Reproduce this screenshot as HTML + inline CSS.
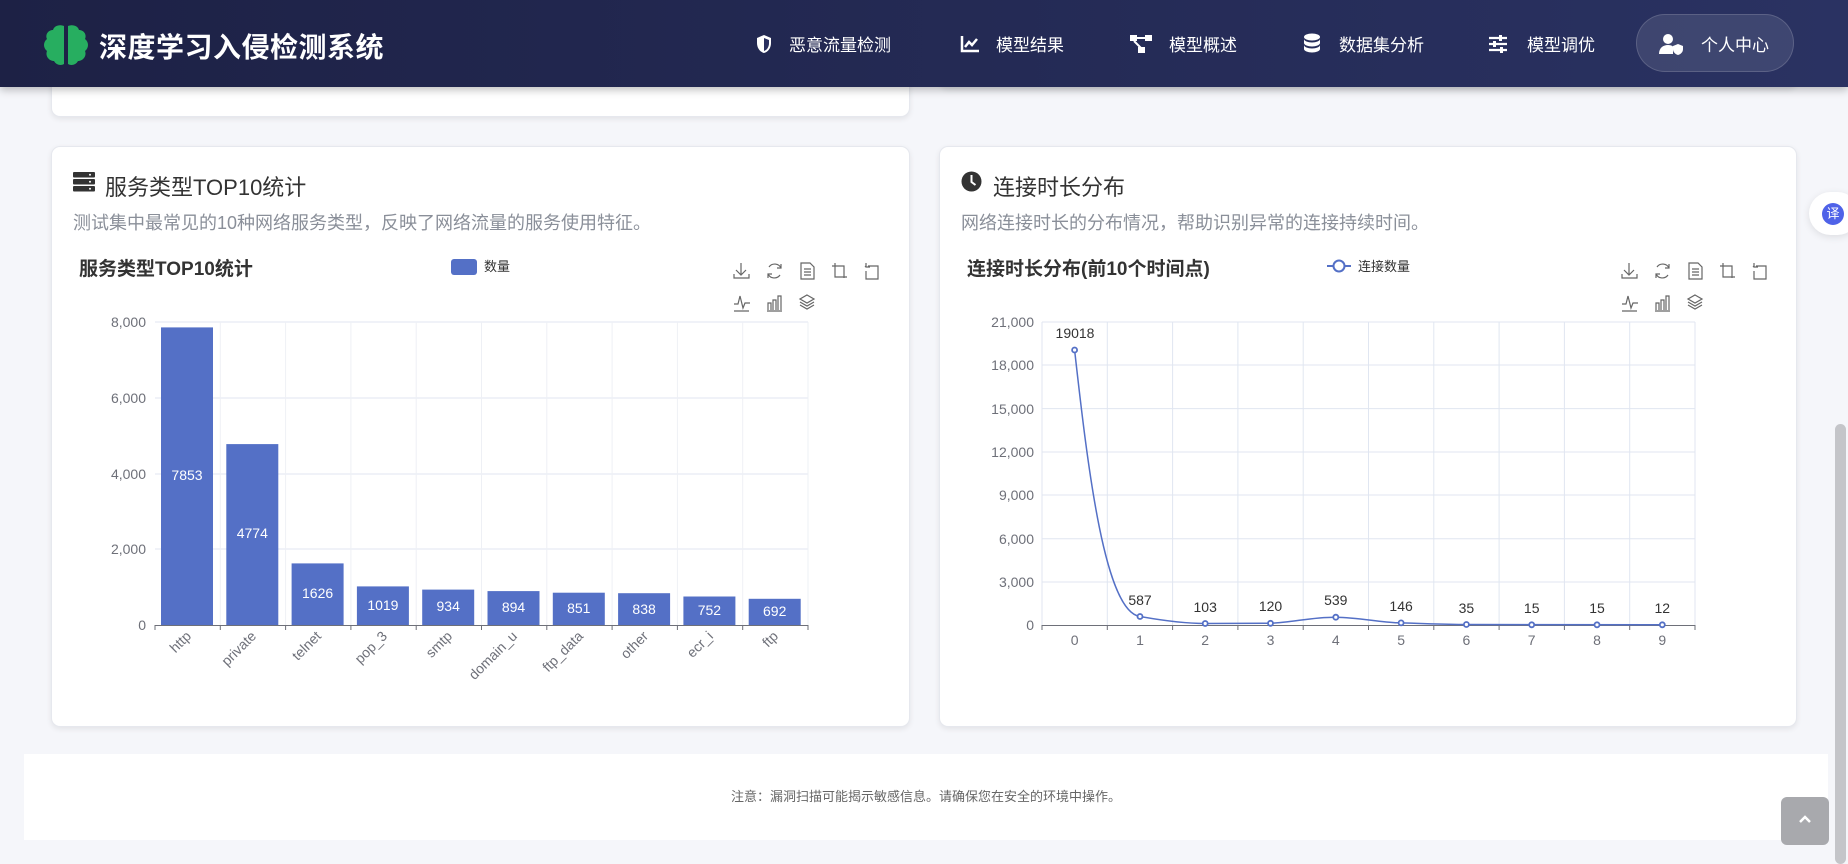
<!DOCTYPE html>
<html><head><meta charset="utf-8">
<style>
*{margin:0;padding:0;box-sizing:border-box}
body{width:1848px;height:864px;overflow:hidden;background:#f5f6fa;font-family:"Liberation Sans","Noto Sans CJK SC",sans-serif;position:relative}
.hdr{position:absolute;left:0;top:0;width:1848px;height:87px;background:linear-gradient(90deg,#1d2145,#2a3262);box-shadow:0 3px 8px rgba(0,0,0,.25);z-index:5}
.logo{position:absolute;left:99px;top:26px;color:#fff;font-size:28px;font-weight:bold;letter-spacing:0.5px}
.nav{position:absolute;top:31px;color:#fff;font-size:17px;display:flex;align-items:center;gap:10px}
.nav svg{display:block}
.pill{position:absolute;left:1636px;top:14px;width:158px;height:58px;border-radius:29px;background:rgba(255,255,255,.1);border:1px solid rgba(255,255,255,.15)}
.card{position:absolute;background:#fff;border:1px solid #e6e8ee;border-radius:9px;box-shadow:0 2px 6px rgba(0,0,0,.08)}
.ct{position:absolute;left:105px;top:170px;font-size:22px;color:#333}
.cd{position:absolute;top:209px;font-size:18px;color:#8a8f99}
.footer{position:absolute;left:24px;top:754px;width:1804px;height:86px;background:#fff;text-align:center;font-size:13px;color:#666;line-height:86px}
</style></head><body>
<div class="hdr">
  <svg style="position:absolute;left:42px;top:24px" width="48" height="42" viewBox="0 0 48 42">
    <path d="M22 2c-5-2-10 0-11 4-5 0-8 5-6 9-4 3-4 9 0 12-2 5 2 10 7 10 2 4 7 5 10 3z" fill="#27ae60"/>
    <path d="M26 2c5-2 10 0 11 4 5 0 8 5 6 9 4 3 4 9 0 12 2 5-2 10-7 10-2 4-7 5-10 3z" fill="#27ae60"/>
  </svg>
  <div class="logo">深度学习入侵检测系统</div>
  <div class="nav" style="left:755px"><svg width="18" height="20" viewBox="0 0 18 20"><path d="M9 1L2 4v5c0 5 3 9 7 10 4-1 7-5 7-10V4z" fill="#fff"/><path d="M9 4v13c3-1 5-4 5-8V6z" fill="#2a3060"/></svg><span style="margin-left:6px">恶意流量检测</span></div>
  <div class="nav" style="left:960px"><svg width="20" height="18" viewBox="0 0 20 18"><path d="M2 1v15h17" stroke="#fff" stroke-width="2.5" fill="none"/><path d="M5 12l4-5 3 3 5-6" stroke="#fff" stroke-width="2.5" fill="none"/></svg><span style="margin-left:6px">模型结果</span></div>
  <div class="nav" style="left:1129px"><svg width="24" height="20" viewBox="0 0 24 20"><rect x="1" y="1" width="7" height="6" fill="#fff"/><rect x="16" y="1" width="7" height="6" fill="#fff"/><rect x="9" y="13" width="7" height="6" fill="#fff"/><path d="M8 4h8M5 7l7 7" stroke="#fff" stroke-width="2"/></svg><span style="margin-left:6px">模型概述</span></div>
  <div class="nav" style="left:1303px"><svg width="18" height="22" viewBox="0 0 18 22"><ellipse cx="9" cy="4" rx="8" ry="3.5" fill="#fff"/><path d="M1 6v4c0 2 4 3.5 8 3.5s8-1.5 8-3.5V6c0 2-4 3.5-8 3.5S1 8 1 6zM1 12v4c0 2 4 3.5 8 3.5s8-1.5 8-3.5v-4c0 2-4 3.5-8 3.5S1 14 1 12z" fill="#fff"/></svg><span style="margin-left:8px">数据集分析</span></div>
  <div class="nav" style="left:1488px"><svg width="20" height="18" viewBox="0 0 20 18"><path d="M1 3h18M1 9h18M1 15h18" stroke="#fff" stroke-width="2.2"/><rect x="11" y="0" width="3" height="6" fill="#fff"/><rect x="5" y="6" width="3" height="6" fill="#fff"/><rect x="12" y="12" width="3" height="6" fill="#fff"/></svg><span style="margin-left:9px">模型调优</span></div>
  <div class="pill"></div>
  <div class="nav" style="left:1659px;top:31px"><svg width="26" height="22" viewBox="0 0 26 22"><circle cx="9" cy="6" r="5" fill="#fff"/><path d="M0 21c0-6 4-9 9-9 2 0 4 .5 5 1.5V21z" fill="#fff"/><path d="M19 11l-5 2v3c0 3 2 5 5 6 3-1 5-3 5-6v-3z" fill="#fff"/></svg><span style="margin-left:6px">个人中心</span></div>
</div>

<div class="card" style="left:51px;top:40px;width:859px;height:77px"></div>
<div class="card" style="left:939px;top:40px;width:858px;height:48px"></div>

<div class="card" style="left:51px;top:146px;width:859px;height:581px"></div>
<div class="card" style="left:939px;top:146px;width:858px;height:581px"></div>

<svg style="position:absolute;left:73px;top:172px" width="22" height="20" viewBox="0 0 22 20"><rect x="0" y="0" width="22" height="5.5" rx="1" fill="#333"/><rect x="0" y="7" width="22" height="5.5" rx="1" fill="#333"/><rect x="0" y="14" width="22" height="5.5" rx="1" fill="#333"/><circle cx="17" cy="2.7" r="1" fill="#fff"/><circle cx="17" cy="9.7" r="1" fill="#fff"/><circle cx="17" cy="16.7" r="1" fill="#fff"/></svg>
<div class="ct">服务类型TOP10统计</div>
<div class="cd" style="left:73px">测试集中最常见的10种网络服务类型，反映了网络流量的服务使用特征。</div>

<svg style="position:absolute;left:961px;top:171px" width="21" height="21" viewBox="0 0 21 21"><circle cx="10.5" cy="10.5" r="10" fill="#333"/><path d="M10.5 4v7l4 3" stroke="#fff" stroke-width="2" fill="none"/></svg>
<div class="ct" style="left:993px">连接时长分布</div>
<div class="cd" style="left:961px">网络连接时长的分布情况，帮助识别异常的连接持续时间。</div>

<svg style="position:absolute;left:0;top:0" width="1848" height="864" viewBox="0 0 1848 864" font-family="Liberation Sans, Noto Sans CJK SC, sans-serif">
<g id="L">
 <text x="79" y="275" font-size="19" font-weight="bold" fill="#333">服务类型TOP10统计</text>
 <rect x="451" y="259" width="26" height="16" rx="3" fill="#5470c6"/>
 <text x="484" y="271" font-size="13" fill="#333">数量</text>
 <g stroke="#e0e6f1" stroke-width="1">
  <line x1="155" y1="322" x2="808" y2="322"/><line x1="155" y1="398" x2="808" y2="398"/><line x1="155" y1="474" x2="808" y2="474"/><line x1="155" y1="549" x2="808" y2="549"/>
 </g>
 <g stroke="#eef0f5">
  <line x1="220.3" y1="322" x2="220.3" y2="625"/><line x1="285.6" y1="322" x2="285.6" y2="625"/><line x1="350.9" y1="322" x2="350.9" y2="625"/><line x1="416.2" y1="322" x2="416.2" y2="625"/><line x1="481.5" y1="322" x2="481.5" y2="625"/><line x1="546.8" y1="322" x2="546.8" y2="625"/><line x1="612.1" y1="322" x2="612.1" y2="625"/><line x1="677.4" y1="322" x2="677.4" y2="625"/><line x1="742.7" y1="322" x2="742.7" y2="625"/><line x1="808" y1="322" x2="808" y2="625"/>
 </g>
 <g font-size="14" fill="#6e7079" text-anchor="end">
  <text x="146" y="327">8,000</text><text x="146" y="403">6,000</text><text x="146" y="479">4,000</text><text x="146" y="554">2,000</text><text x="146" y="630">0</text>
 </g>
 <g fill="#5470c6">
  <rect x="161" y="327.4" width="52" height="297.6"/>
  <rect x="226.3" y="444.1" width="52" height="180.9"/>
  <rect x="291.6" y="563.4" width="52" height="61.6"/>
  <rect x="356.9" y="586.4" width="52" height="38.6"/>
  <rect x="422.2" y="589.6" width="52" height="35.4"/>
  <rect x="487.5" y="591.1" width="52" height="33.9"/>
  <rect x="552.8" y="592.7" width="52" height="32.3"/>
  <rect x="618.1" y="593.2" width="52" height="31.8"/>
  <rect x="683.4" y="596.5" width="52" height="28.5"/>
  <rect x="748.7" y="598.8" width="52" height="26.2"/>
 </g>
 <g font-size="14" fill="#fff" text-anchor="middle">
  <text x="187" y="480">7853</text><text x="252.3" y="538">4774</text><text x="317.6" y="598">1626</text><text x="382.9" y="610">1019</text><text x="448.2" y="611">934</text><text x="513.5" y="612">894</text><text x="578.8" y="613">851</text><text x="644.1" y="614">838</text><text x="709.4" y="615">752</text><text x="774.7" y="616">692</text>
 </g>
 <line x1="155" y1="625.5" x2="808" y2="625.5" stroke="#6e7079"/>
 <g stroke="#6e7079"><line x1="155" y1="625" x2="155" y2="630"/><line x1="220.3" y1="625" x2="220.3" y2="630"/><line x1="285.6" y1="625" x2="285.6" y2="630"/><line x1="350.9" y1="625" x2="350.9" y2="630"/><line x1="416.2" y1="625" x2="416.2" y2="630"/><line x1="481.5" y1="625" x2="481.5" y2="630"/><line x1="546.8" y1="625" x2="546.8" y2="630"/><line x1="612.1" y1="625" x2="612.1" y2="630"/><line x1="677.4" y1="625" x2="677.4" y2="630"/><line x1="742.7" y1="625" x2="742.7" y2="630"/><line x1="808" y1="625" x2="808" y2="630"/></g>
 <g font-size="14" fill="#6e7079" text-anchor="end">
  <text transform="translate(192,637) rotate(-45)">http</text>
  <text transform="translate(257,637) rotate(-45)">private</text>
  <text transform="translate(322,637) rotate(-45)">telnet</text>
  <text transform="translate(388,637) rotate(-45)">pop_3</text>
  <text transform="translate(453,637) rotate(-45)">smtp</text>
  <text transform="translate(518,637) rotate(-45)">domain_u</text>
  <text transform="translate(584,637) rotate(-45)">ftp_data</text>
  <text transform="translate(649,637) rotate(-45)">other</text>
  <text transform="translate(714,637) rotate(-45)">ecr_i</text>
  <text transform="translate(779,637) rotate(-45)">ftp</text>
 </g>
</g>
<g id="tb" fill="none" stroke="#666" stroke-width="1.2">
 <g transform="translate(733,262)"><path d="M8 1v11M3 8l5 5 5-5M1 12v4h15v-4"/></g>
 <g transform="translate(766,262)"><path d="M3 5a7 7 0 0 1 12 1M14 13a7 7 0 0 1-12-1M15 2v4h-4M2 16v-4h4"/></g>
 <g transform="translate(799,262)"><path d="M2 1h9l4 4v12H2zM5 7h7M5 10h7M5 13h7"/></g>
 <g transform="translate(831,262)"><path d="M4 1v14h12M1 4h12v12"/></g>
 <g transform="translate(863,262)"><path d="M3 1v4h4M3 5l-1-1M5 4h10v13H3V9"/></g>
 <g transform="translate(733,294)"><path d="M1 10h4l2-8 3 12 2-5h5M1 17h15"/></g>
 <g transform="translate(766,294)"><path d="M2 16V9h3v7M7 16V6h3v10M12 16V2h3v14M1 17h15"/></g>
 <g transform="translate(799,294)"><path d="M8 1l7 4-7 4-7-4zM1 8l7 4 7-4M1 11l7 4 7-4"/></g>
</g>
<use href="#tb" transform="translate(888,0)"/>
<g id="R">
 <text x="967" y="275" font-size="19" font-weight="bold" fill="#333">连接时长分布(前10个时间点)</text>
 <line x1="1327" y1="266" x2="1351" y2="266" stroke="#5470c6" stroke-width="2"/>
 <circle cx="1339" cy="266" r="5.5" fill="#fff" stroke="#5470c6" stroke-width="2"/>
 <text x="1358" y="271" font-size="13" fill="#333">连接数量</text>
 <g stroke="#e0e6f1">
  <line x1="1042" y1="322" x2="1695" y2="322"/><line x1="1042" y1="365" x2="1695" y2="365"/><line x1="1042" y1="408.6" x2="1695" y2="408.6"/><line x1="1042" y1="452" x2="1695" y2="452"/><line x1="1042" y1="495" x2="1695" y2="495"/><line x1="1042" y1="538.7" x2="1695" y2="538.7"/><line x1="1042" y1="582" x2="1695" y2="582"/>
  <line x1="1042" y1="322" x2="1042" y2="625"/><line x1="1107.3" y1="322" x2="1107.3" y2="625"/><line x1="1172.6" y1="322" x2="1172.6" y2="625"/><line x1="1237.9" y1="322" x2="1237.9" y2="625"/><line x1="1303.2" y1="322" x2="1303.2" y2="625"/><line x1="1368.5" y1="322" x2="1368.5" y2="625"/><line x1="1433.8" y1="322" x2="1433.8" y2="625"/><line x1="1499.1" y1="322" x2="1499.1" y2="625"/><line x1="1564.4" y1="322" x2="1564.4" y2="625"/><line x1="1629.7" y1="322" x2="1629.7" y2="625"/><line x1="1695" y1="322" x2="1695" y2="625"/>
 </g>
 <g font-size="14" fill="#6e7079" text-anchor="end">
  <text x="1034" y="327">21,000</text><text x="1034" y="370">18,000</text><text x="1034" y="414">15,000</text><text x="1034" y="457">12,000</text><text x="1034" y="500">9,000</text><text x="1034" y="544">6,000</text><text x="1034" y="587">3,000</text><text x="1034" y="630">0</text>
 </g>
 <line x1="1042" y1="625.5" x2="1695" y2="625.5" stroke="#6e7079"/>
 <g stroke="#6e7079"><line x1="1042" y1="625" x2="1042" y2="630"/><line x1="1107.3" y1="625" x2="1107.3" y2="630"/><line x1="1172.6" y1="625" x2="1172.6" y2="630"/><line x1="1237.9" y1="625" x2="1237.9" y2="630"/><line x1="1303.2" y1="625" x2="1303.2" y2="630"/><line x1="1368.5" y1="625" x2="1368.5" y2="630"/><line x1="1433.8" y1="625" x2="1433.8" y2="630"/><line x1="1499.1" y1="625" x2="1499.1" y2="630"/><line x1="1564.4" y1="625" x2="1564.4" y2="630"/><line x1="1629.7" y1="625" x2="1629.7" y2="630"/><line x1="1695" y1="625" x2="1695" y2="630"/></g>
 <g font-size="14" fill="#6e7079" text-anchor="middle">
  <text x="1074.6" y="645">0</text><text x="1140" y="645">1</text><text x="1205.2" y="645">2</text><text x="1270.5" y="645">3</text><text x="1335.8" y="645">4</text><text x="1401.1" y="645">5</text><text x="1466.4" y="645">6</text><text x="1531.7" y="645">7</text><text x="1597" y="645">8</text><text x="1662.3" y="645">9</text>
 </g>
 <path d="M1074.6,350 C1088,470 1105,612 1140,616.5 C1165,621 1185,623.5 1205.2,623.5 C1230,623.5 1250,623.3 1270.5,623.3 C1295,622 1312,617 1335.8,617.2 C1360,617.5 1380,622.5 1401.1,622.9 C1425,623.5 1445,624.5 1466.4,624.5 L1662.3,624.8" fill="none" stroke="#5470c6" stroke-width="1.5"/>
 <g fill="#fff" stroke="#5470c6" stroke-width="1.8">
  <circle cx="1074.6" cy="350" r="2.5"/><circle cx="1140" cy="616.5" r="2.5"/><circle cx="1205.2" cy="623.5" r="2.5"/><circle cx="1270.5" cy="623.3" r="2.5"/><circle cx="1335.8" cy="617.2" r="2.5"/><circle cx="1401.1" cy="622.9" r="2.5"/><circle cx="1466.4" cy="624.5" r="2.5"/><circle cx="1531.7" cy="624.8" r="2.5"/><circle cx="1597" cy="624.8" r="2.5"/><circle cx="1662.3" cy="624.8" r="2.5"/>
 </g>
 <g font-size="14" fill="#333" text-anchor="middle">
  <text x="1075" y="338">19018</text><text x="1140" y="605">587</text><text x="1205.2" y="612">103</text><text x="1270.5" y="611">120</text><text x="1335.8" y="605">539</text><text x="1401.1" y="611">146</text><text x="1466.4" y="613">35</text><text x="1531.7" y="613">15</text><text x="1597" y="613">15</text><text x="1662.3" y="613">12</text>
 </g>
</g>
</svg>

<div class="footer">注意：漏洞扫描可能揭示敏感信息。请确保您在安全的环境中操作。</div>

<div style="position:absolute;left:1809px;top:192px;width:50px;height:43px;border-radius:22px;background:#fff;box-shadow:0 2px 8px rgba(0,0,0,.1)"></div>
<div style="position:absolute;left:1822px;top:203px;width:22px;height:22px;border-radius:50%;background:#4f62e8;color:#fff;font-size:13px;text-align:center;line-height:22px">译</div>
<div style="position:absolute;left:1835px;top:424px;width:11px;height:440px;border-radius:6px;background:#c4c5c9"></div>
<div style="position:absolute;left:1781px;top:797px;width:48px;height:48px;border-radius:6px;background:#a8a9ad"></div>
<svg style="position:absolute;left:1797px;top:813px" width="16" height="12" viewBox="0 0 16 12"><path d="M3 9l5-5 5 5" stroke="#fff" stroke-width="2.5" fill="none"/></svg>
</body></html>
